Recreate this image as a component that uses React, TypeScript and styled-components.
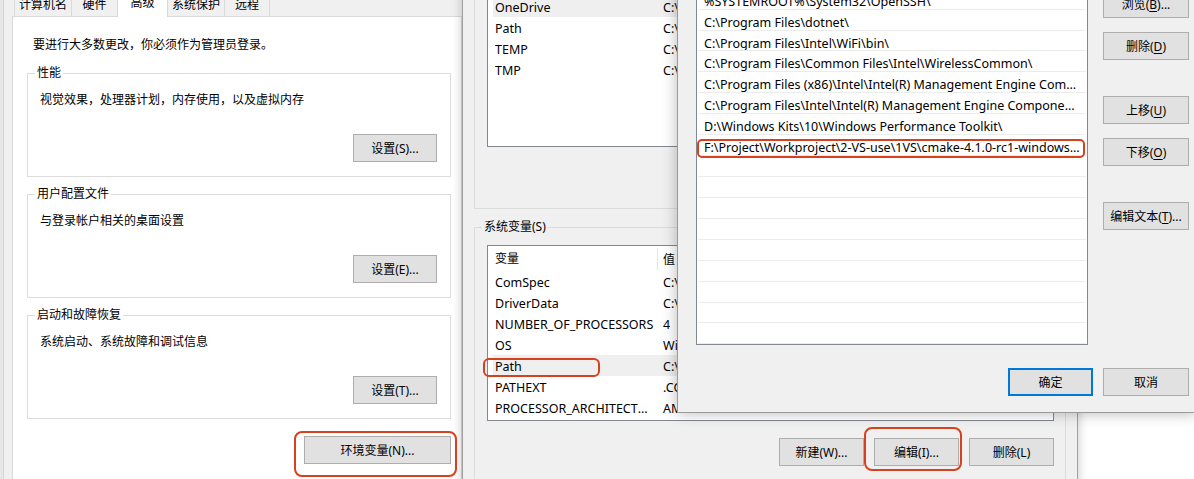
import React from "react"
import styled, { createGlobalStyle } from "styled-components"

const GlobalStyle = createGlobalStyle`
    html, body {
        margin: 0;
        padding: 0;
    }
    body {
        background: #ffffff;
        font-family: "Noto Sans", "Noto Sans CJK SC", sans-serif;
        font-size: 12px;
        color: #000000;
    }
`

const userVars = [
    { name: "ChocolateyLastPathUpdate", value: "134012345678901234" },
    { name: "OneDrive", value: "C:\\Users\\admin\\OneDrive", selected: true },
    { name: "Path", value: "C:\\Users\\admin\\AppData\\Local\\Microsoft\\WindowsApps;" },
    { name: "TEMP", value: "C:\\Users\\admin\\AppData\\Local\\Temp" },
    { name: "TMP", value: "C:\\Users\\admin\\AppData\\Local\\Temp" },
]

const systemVars = [
    { name: "ComSpec", value: "C:\\WINDOWS\\system32\\cmd.exe" },
    { name: "DriverData", value: "C:\\Windows\\System32\\Drivers\\DriverData" },
    { name: "NUMBER_OF_PROCESSORS", value: "4" },
    { name: "OS", value: "Windows_NT" },
    { name: "Path", value: "C:\\Program Files\\Common Files\\Oracle\\Java\\javapath;", selected: true },
    { name: "PATHEXT", value: ".COM;.EXE;.BAT;.CMD;.VBS;.VBE;.JS;.JSE;.WSF;.WSH;.MSC" },
    { name: "PROCESSOR_ARCHITECTURE", value: "AMD64" },
]

const pathEntries = [
    "%SystemRoot%\\system32",
    "%SystemRoot%",
    "%SystemRoot%\\System32\\Wbem",
    "%SYSTEMROOT%\\System32\\WindowsPowerShell\\v1.0\\",
    "%SYSTEMROOT%\\System32\\OpenSSH\\",
    "C:\\Program Files\\dotnet\\",
    "C:\\Program Files\\Intel\\WiFi\\bin\\",
    "C:\\Program Files\\Common Files\\Intel\\WirelessCommon\\",
    "C:\\Program Files (x86)\\Intel\\Intel(R) Management Engine Components\\DAL",
    "C:\\Program Files\\Intel\\Intel(R) Management Engine Components\\DAL",
    "D:\\Windows Kits\\10\\Windows Performance Toolkit\\",
    "F:\\Project\\Workproject\\2-VS-use\\1VS\\cmake-4.1.0-rc1-windows-x86_64\\bin",
]

const groups = [
    { title: "性能", text: "视觉效果，处理器计划，内存使用，以及虚拟内存", button: "设置(S)..." },
    { title: "用户配置文件", text: "与登录帐户相关的桌面设置", button: "设置(E)..." },
    { title: "启动和故障恢复", text: "系统启动、系统故障和调试信息", button: "设置(T)..." },
]

const tabs = [
    { label: "计算机名", width: 58 },
    { label: "硬件", width: 47 },
    { label: "高级", width: 51, active: true },
    { label: "系统保护", width: 58 },
    { label: "远程", width: 46 },
]

export default function App() {
    return (
        <>
            <GlobalStyle />
            <Desktop>
                <BackEdge />

                {/* 系统属性 - 高级 */}
                <SysPropsWindow>
                    <TabStrip>
                        {tabs.map((t) => (
                            <Tab key={t.label} $w={t.width} $active={!!t.active}>
                                {t.label}
                            </Tab>
                        ))}
                    </TabStrip>
                    <TabPage>
                        <Notice>要进行大多数更改，你必须作为管理员登录。</Notice>
                        {groups.map((g, i) => (
                            <PanelGroup key={g.title} $first={i === 0}>
                                <Legend $bg="#ffffff">{g.title}</Legend>
                                <GroupText>{g.text}</GroupText>
                                <Button $w={84}>{g.button}</Button>
                            </PanelGroup>
                        ))}
                        <EnvButtonRow>
                            <Button $w={147}>环境变量(N)...</Button>
                        </EnvButtonRow>
                    </TabPage>
                </SysPropsWindow>

                {/* 环境变量 */}
                <EnvWindow>
                    <VarGroup $pt={18}>
                        <Legend $bg="#f0f0f0">用户变量(U)</Legend>
                        <VarList $h={198}>
                            <VarHeader>
                                <HeaderName>变量</HeaderName>
                                <HeaderValue>值</HeaderValue>
                            </VarHeader>
                            {userVars.map((v) => (
                                <VarRow key={v.name} $selected={!!v.selected}>
                                    <VarName>{v.name}</VarName>
                                    <VarValue>{v.value}</VarValue>
                                </VarRow>
                            ))}
                        </VarList>
                        <ButtonRow $mt={18}>
                            <Button $w={85}>新建(N)...</Button>
                            <Button $w={85}>编辑(E)...</Button>
                            <Button $w={85}>删除(D)</Button>
                        </ButtonRow>
                    </VarGroup>

                    <VarGroup $pt={17} $mt={18}>
                        <Legend $bg="#f0f0f0">系统变量(S)</Legend>
                        <VarList $h={176}>
                            <VarHeader>
                                <HeaderName>变量</HeaderName>
                                <HeaderValue>值</HeaderValue>
                            </VarHeader>
                            {systemVars.map((v) => (
                                <VarRow key={v.name} $selected={!!v.selected}>
                                    <VarName>{v.name}</VarName>
                                    <VarValue>{v.value}</VarValue>
                                </VarRow>
                            ))}
                        </VarList>
                        <ButtonRow $mt={17}>
                            <Button $w={85}>新建(W)...</Button>
                            <Button $w={85}>编辑(I)...</Button>
                            <Button $w={85}>删除(L)</Button>
                        </ButtonRow>
                    </VarGroup>
                </EnvWindow>

                {/* 编辑环境变量 */}
                <EditWindow>
                    <EditBody>
                        <PathList>
                            {pathEntries.map((p) => (
                                <PathRow key={p}>{p}</PathRow>
                            ))}
                            {Array.from({ length: 10 }).map((_, i) => (
                                <PathRow key={"empty" + i} />
                            ))}
                        </PathList>
                        <SideButtons>
                            <Button $w={86}>新建(N)</Button>
                            <Button $w={86}>编辑(E)</Button>
                            <Button $w={86}>
                                浏览(<u>B</u>)...
                            </Button>
                            <Button $w={86}>
                                删除(<u>D</u>)
                            </Button>
                            <Button $w={86} $mt={22}>
                                上移(<u>U</u>)
                            </Button>
                            <Button $w={86}>
                                下移(<u>O</u>)
                            </Button>
                            <Button $w={86} $mt={22}>
                                编辑文本(<u>T</u>)...
                            </Button>
                        </SideButtons>
                    </EditBody>
                    <Footer>
                        <Button $w={85} $primary>
                            确定
                        </Button>
                        <Button $w={86}>取消</Button>
                    </Footer>
                </EditWindow>

                {/* red callouts drawn over the screenshot */}
                <Callout $x={294} $y={431} $w={163} $h={46} $r={8} />
                <Callout $x={483} $y={358} $w={117} $h={19} $r={6} />
                <Callout $x={697} $y={139} $w={388} $h={19} $r={5} />
                <Callout $x={864} $y={427} $w={98} $h={44} $r={8} />
            </Desktop>
        </>
    )
}

const Desktop = styled.div`
    position: relative;
    width: 1194px;
    height: 479px;
    overflow: hidden;
    background: #ffffff;
`

// sliver of another window peeking out on the far left
const BackEdge = styled.div`
    position: absolute;
    left: 0;
    top: 0;
    width: 3px;
    height: 479px;
    background: #e6e6e6;
    border-right: 1px solid #d2d2d2;
`

const SysPropsWindow = styled.div`
    position: absolute;
    left: 3px;
    top: 0;
    width: 459px;
    height: 479px;
    box-sizing: border-box;
    background: #f0f0f0;
    border-left: 1px solid #d4d4d4;
    padding-left: 8px;
`

const TabStrip = styled.div`
    display: flex;
    align-items: flex-end;
    height: 22px;
    margin-top: -6px;
    padding-left: 2px;
`

const Tab = styled.div<{ $w: number; $active: boolean }>`
    position: relative;
    z-index: ${(p) => (p.$active ? 1 : 0)};
    width: ${(p) => p.$w}px;
    height: ${(p) => (p.$active ? 25 : 22)}px;
    margin-bottom: ${(p) => (p.$active ? -1 : 0)}px;
    margin-right: -1px;
    box-sizing: border-box;
    padding-top: 2px;
    text-align: center;
    line-height: 16px;
    background: ${(p) => (p.$active ? "#ffffff" : "#f0f0f0")};
    border: 1px solid #d9d9d9;
    border-bottom: none;
`

const TabPage = styled.div`
    width: 450px;
    height: 470px;
    box-sizing: border-box;
    display: flex;
    flex-direction: column;
    background: #ffffff;
    border: 1px solid #d9d9d9;
    padding: 19px 10px 0 14px;
`

const Notice = styled.div`
    position: relative;
    top: 1px;
    margin-left: 6px;
    line-height: 16px;
`

const PanelGroup = styled.div<{ $first: boolean }>`
    position: relative;
    height: 104px;
    box-sizing: border-box;
    display: flex;
    flex-direction: column;
    align-items: flex-end;
    margin-top: ${(p) => (p.$first ? 21 : 17)}px;
    padding: 17px 13px 14px 12px;
    border: 1px solid #dcdcdc;
`

const Legend = styled.span<{ $bg: string }>`
    position: absolute;
    top: -9px;
    left: 7px;
    padding: 0 2px;
    line-height: 16px;
    background: ${(p) => p.$bg};
`

const GroupText = styled.div`
    align-self: stretch;
    padding-top: 1px;
    line-height: 16px;
`

const Button = styled.button<{ $w: number; $primary?: boolean; $mt?: number }>`
    width: ${(p) => p.$w}px;
    height: 28px;
    flex-shrink: 0;
    margin-top: ${(p) => p.$mt ?? 0}px;
    box-sizing: border-box;
    padding: 0;
    font-family: inherit;
    font-size: 12px;
    color: #000000;
    background: #e1e1e1;
    border: ${(p) => (p.$primary ? "2px solid #0078d7" : "1px solid #adadad")};
    border-radius: 0;

    ${PanelGroup} & {
        margin-top: auto;
    }

    u {
        text-decoration: underline;
        text-underline-offset: 2px;
    }
`

const EnvButtonRow = styled.div`
    display: flex;
    justify-content: flex-end;
    margin-top: 17px;
`

const EnvWindow = styled.div`
    position: absolute;
    left: 462px;
    top: -80px;
    width: 616px;
    height: 600px;
    box-sizing: border-box;
    background: #f0f0f0;
    border: 1px solid #a0a0a0;
    box-shadow: 0 0 10px rgba(0, 0, 0, 0.22);
    padding: 9px 11px 0 11px;
`

const VarGroup = styled.div<{ $pt: number; $mt?: number }>`
    position: relative;
    box-sizing: border-box;
    margin-top: ${(p) => p.$mt ?? 0}px;
    padding: ${(p) => p.$pt}px 11px 15px 12px;
    border: 1px solid #dcdcdc;
`

const VarList = styled.div<{ $h: number }>`
    height: ${(p) => p.$h}px;
    box-sizing: border-box;
    overflow: hidden;
    background: #ffffff;
    border: 1px solid #828790;
    padding-left: 5px;
`

const VarHeader = styled.div`
    display: flex;
    align-items: center;
    height: 25px;
    padding-top: 1px;
    box-sizing: border-box;
`

const HeaderName = styled.div`
    width: 165px;
    height: 22px;
    box-sizing: border-box;
    padding-left: 2px;
    line-height: 22px;
    border-right: 1px solid #e5e5e5;
`

const HeaderValue = styled.div`
    padding-left: 5px;
`

const VarRow = styled.div<{ $selected: boolean }>`
    display: flex;
    align-items: center;
    height: 21px;
    box-sizing: border-box;
    padding-top: 1px;
    font-size: 12.5px;
    background: ${(p) => (p.$selected ? "#efefef" : "transparent")};
`

const VarName = styled.div`
    width: 164px;
    flex-shrink: 0;
    box-sizing: border-box;
    padding: 0 2px;
    white-space: nowrap;
    overflow: hidden;
    text-overflow: ellipsis;
`

const VarValue = styled.div`
    padding-left: 6px;
    white-space: nowrap;
    overflow: hidden;
`

const ButtonRow = styled.div<{ $mt: number }>`
    display: flex;
    justify-content: flex-end;
    gap: 10px;
    margin-top: ${(p) => p.$mt}px;
`

const EditWindow = styled.div`
    position: absolute;
    left: 677px;
    top: -130px;
    width: 520px;
    height: 543px;
    box-sizing: border-box;
    display: flex;
    flex-direction: column;
    background: #f0f0f0;
    border: 1px solid #9a9a9a;
    box-shadow: 0 0 14px rgba(0, 0, 0, 0.28);
    padding: 33px 7px 16px 18px;
`

const EditBody = styled.div`
    display: grid;
    grid-template-columns: 392px 86px;
    column-gap: 15px;
`

const PathList = styled.div`
    height: 441px;
    box-sizing: border-box;
    overflow: hidden;
    background: #ffffff;
    border: 1px solid #828790;
`

const PathRow = styled.div`
    height: 20.93px;
    box-sizing: border-box;
    margin: 0 1px;
    padding: 5px 4px 0 6px;
    font-size: 12.5px;
    line-height: 15px;
    border-bottom: 1px solid #ececec;
    white-space: nowrap;
    overflow: hidden;
    text-overflow: ellipsis;
`

const SideButtons = styled.div`
    display: flex;
    flex-direction: column;
    gap: 14px;
    padding-top: 2px;
`

const Footer = styled.div`
    display: flex;
    justify-content: flex-end;
    gap: 10px;
    margin-top: 23px;
`

const Callout = styled.div<{ $x: number; $y: number; $w: number; $h: number; $r: number }>`
    position: absolute;
    left: ${(p) => p.$x}px;
    top: ${(p) => p.$y}px;
    width: ${(p) => p.$w}px;
    height: ${(p) => p.$h}px;
    box-sizing: border-box;
    border: 2px solid #d8401e;
    border-radius: ${(p) => p.$r}px;
    pointer-events: none;
`
